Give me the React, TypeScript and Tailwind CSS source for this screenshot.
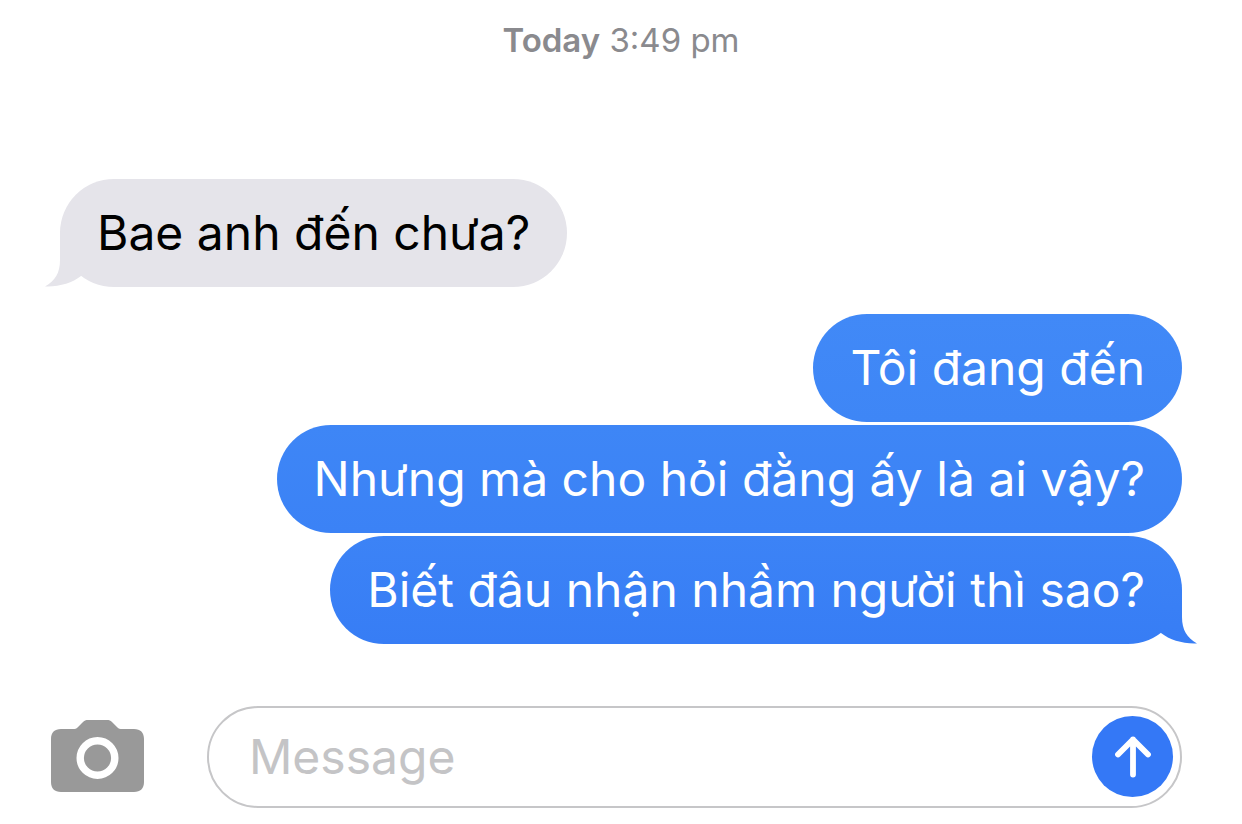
import type { ReactNode } from "react";

type BubbleProps = {
  children: ReactNode;
  className: string;
};

const Bubble = ({ children, className }: BubbleProps) => (
  <li
    className={`relative rounded-[54px] px-[37px] py-[19px] text-[48px] leading-[70px] ${className}`}
  >
    {children}
  </li>
);

const ReceivedTail = () => (
  <svg
    className="absolute bottom-0 -left-[15px] h-[54px] w-[36px] fill-[#e5e4ea]"
    viewBox="0 0 36 54"
    aria-hidden="true"
  >
    <path d="M15 0V27C15 40 10 48 0 53.400C14 54 27 50 36 43V0Z" />
  </svg>
);

const SentTail = () => (
  <svg
    className="absolute -right-[15px] bottom-0 h-[54px] w-[36px]"
    viewBox="0 0 36 54"
    aria-hidden="true"
  >
    <defs>
      <linearGradient id="tail" x1="0" y1="0" x2="0" y2="1">
        <stop offset="0" stopColor="#3a80f5" />
        <stop offset="1" stopColor="#377df5" />
      </linearGradient>
    </defs>
    <path fill="url(#tail)" d="M21 0V27C21 40 26 48 36 53.400C22 54 9 50 0 43V0Z" />
  </svg>
);

const CameraIcon = () => (
  <svg className="h-[72px] w-[93px]" viewBox="0 0 93 72" aria-hidden="true">
    <path
      fill="#999999"
      d="M10 9H22C24 9 25.500 8.500 26.500 7.500L31.500 2.500C33.500 0.600 34.500 0 37.500 0H55.500C58.500 0 59.500 0.600 61.500 2.500L66.500 7.500C67.500 8.500 69 9 71 9H83C89.500 9 93 12.500 93 19V62C93 68.500 89.500 72 83 72H10C3.500 72 0 68.500 0 62V19C0 12.500 3.500 9 10 9Z"
    />
    <circle cx="46.500" cy="38" r="17.300" fill="none" stroke="#ffffff" strokeWidth="7.400" />
  </svg>
);

const SendIcon = () => (
  <svg className="h-[42px] w-[36px]" viewBox="0 0 36 42" aria-hidden="true">
    <path
      d="M18 3.500V38.500M3 18.500L18 3.500L33 18.500"
      fill="none"
      stroke="#ffffff"
      strokeWidth="5.800"
      strokeLinecap="round"
      strokeLinejoin="round"
    />
  </svg>
);

const App = () => {
  return (
    <main className="bg-white px-[60px] py-[16px] font-['Inter','Liberation_Sans',sans-serif] text-black">
      <p className="text-center text-[33px] leading-[48px] text-[#8a8a8e]">
        <strong className="font-semibold">Today</strong> 3:49 pm
      </p>

      <ul className="mt-[115px] flex flex-col items-end gap-[3px]">
        <Bubble className="mb-[24px] self-start bg-[#e5e4ea]">
          <ReceivedTail />
          Bae anh đến chưa?
        </Bubble>
        <Bubble className="bg-linear-to-b from-[#4189f7] to-[#3e86f6] text-white">
          Tôi đang đến
        </Bubble>
        <Bubble className="bg-linear-to-b from-[#3e86f6] to-[#3b82f6] text-white">
          Nhưng mà cho hỏi đằng ấy là ai vậy?
        </Bubble>
        <Bubble className="bg-linear-to-b from-[#3c83f6] to-[#377df5] text-white">
          <SentTail />
          Biết đâu nhận nhầm người thì sao?
        </Bubble>
      </ul>

      <form
        className="mt-[62px] -ml-[9px] flex items-center gap-[63px]"
        onSubmit={(e) => e.preventDefault()}
      >
        <button type="button" aria-label="Camera" className="shrink-0 pb-[2px]">
          <CameraIcon />
        </button>
        <div className="flex min-w-0 flex-1 items-center rounded-full border-2 border-[#c6c6c8] pt-[8px] pr-[7px] pb-[9px] pl-[40px]">
          <input
            type="text"
            aria-label="Message"
            placeholder="Message"
            className="h-[81px] min-w-0 flex-1 bg-transparent text-[48px] outline-none placeholder:text-[#c4c4c6]"
          />
          <button
            type="submit"
            aria-label="Send"
            className="flex size-[81px] shrink-0 items-center justify-center rounded-full bg-[#3478f6]"
          >
            <SendIcon />
          </button>
        </div>
      </form>
    </main>
  );
};

export default App;
